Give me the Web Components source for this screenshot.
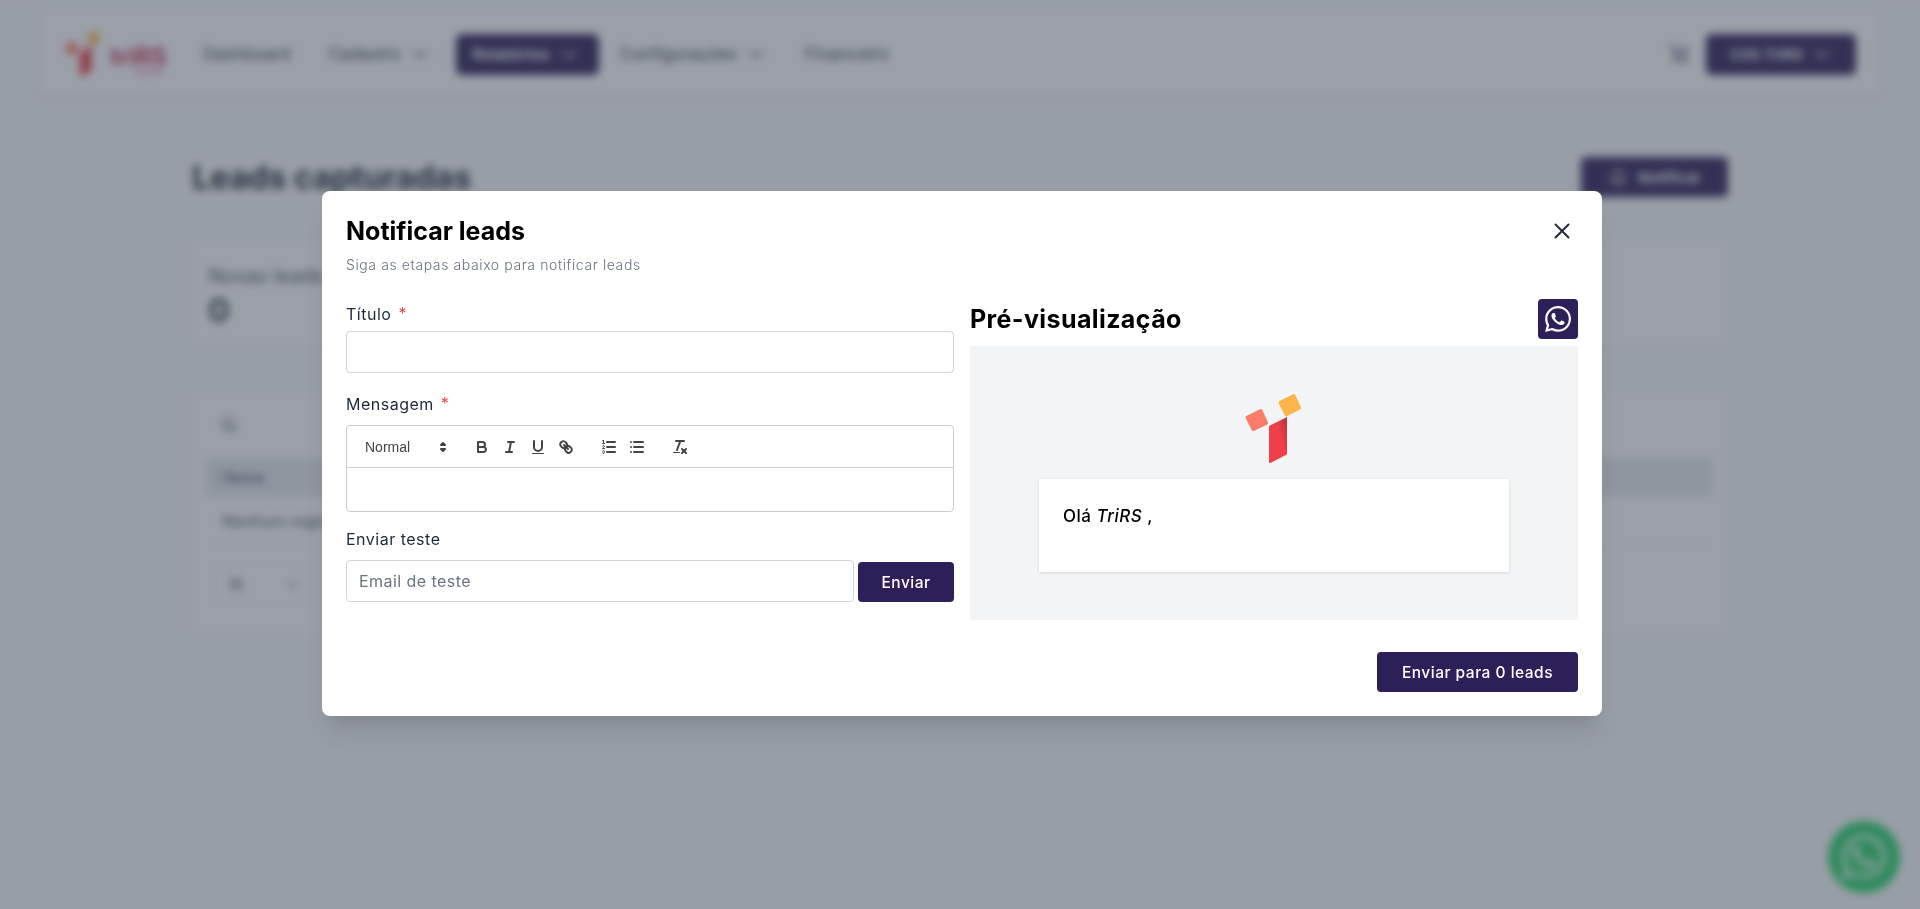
<!DOCTYPE html>
<html lang="pt-BR">
<head>
<meta charset="utf-8">
<title>Leads capturadas</title>
<style>
  html, body { margin: 0; height: 100%; overflow: hidden; }
  body { background: #f9fafb; font-family: Inter, "Liberation Sans", sans-serif; color: #111827; }
</style>
</head>
<body>
<leads-app></leads-app>

<script>
const WA_PATH = 'M17.472 14.382c-.297-.149-1.758-.867-2.03-.967-.273-.099-.471-.148-.67.15-.197.297-.767.966-.94 1.164-.173.199-.347.223-.644.075-.297-.15-1.255-.463-2.39-1.475-.883-.788-1.48-1.761-1.653-2.059-.173-.297-.018-.458.13-.606.134-.133.298-.347.446-.52.149-.174.198-.298.298-.497.099-.198.05-.371-.025-.52-.075-.149-.669-1.612-.916-2.207-.242-.579-.487-.5-.669-.51-.173-.008-.371-.01-.57-.01-.198 0-.52.074-.792.372-.272.297-1.04 1.016-1.04 2.479 0 1.462 1.065 2.875 1.213 3.074.149.198 2.096 3.2 5.077 4.487.709.306 1.262.489 1.694.625.712.227 1.36.195 1.871.118.571-.085 1.758-.719 2.006-1.413.248-.694.248-1.289.173-1.413-.074-.124-.272-.198-.57-.347m-5.421 7.403h-.004a9.87 9.87 0 01-5.031-1.378l-.361-.214-3.741.982.998-3.648-.235-.374a9.86 9.86 0 01-1.51-5.26c.001-5.45 4.436-9.884 9.888-9.884 2.64 0 5.122 1.03 6.988 2.898a9.825 9.825 0 012.893 6.994c-.003 5.45-4.437 9.884-9.885 9.884m8.413-18.297A11.815 11.815 0 0012.05 0C5.495 0 .16 5.335.157 11.892c0 2.096.547 4.142 1.588 5.945L.057 24l6.305-1.654a11.882 11.882 0 005.683 1.448h.005c6.554 0 11.89-5.335 11.893-11.893a11.821 11.821 0 00-3.48-8.413z';

const CHEVRON = '<svg width="20" height="20" viewBox="0 0 20 20" fill="none" stroke="currentColor" stroke-width="1.6" stroke-linecap="round" stroke-linejoin="round"><path d="M3 7l7 7 7-7"/></svg>';

class Base extends HTMLElement {
  connectedCallback() {
    if (this.shadowRoot) return;
    this.attachShadow({ mode: 'open' });
    this.shadowRoot.innerHTML = this.render();
  }
}

class TrirsMark extends Base {
  render() {
    return `<style>:host{display:block;line-height:0}</style>
    <svg width="100%" height="100%" viewBox="0 0 58 70">
      <defs><linearGradient id="fold" x1="1" y1="0" x2="0.55" y2="0.35">
        <stop offset="0" stop-color="#b8323c"/><stop offset="1" stop-color="#ef4049"/></linearGradient></defs>
      <path d="M1.4 22.6 15 15.8q1.6-.7 2.3.8l5.6 12.2q.6 1.5-.8 2.2L9 37.4q-1.6.7-2.3-.8L.7 24.8q-.5-1.5.7-2.2z" fill="#f87c66"/>
      <path d="M34.4 7.6 48 .8q1.6-.7 2.3.8l5.6 12.2q.6 1.5-.8 2.2l-13 6.6q-1.6.7-2.3-.8l-6.1-11.8q-.5-1.5.7-2.2z" fill="#fdb44b"/>
      <path d="M24 32.6 42 23.4v36.3q0 1.3-1.2 1.9L25.4 69.4q-1.4.6-1.4-1z" fill="url(#fold)"/>
    </svg>`;
  }
}

class NavItem extends Base {
  render() {
    const active = this.hasAttribute('active');
    return `<style>
      :host{display:flex;align-items:center;height:41px;flex:none;box-sizing:border-box;padding:0 16px;gap:9px;
        border-radius:6px;font-size:${active ? 16 : 17}px;font-weight:${active ? 600 : 400};white-space:nowrap;
        color:${active ? '#fff' : '#374151'};background:${active ? '#2d1f57' : 'transparent'}}
      svg{flex:none}
    </style><slot></slot>${this.hasAttribute('menu') ? CHEVRON : ''}`;
  }
}

class NavBar extends Base {
  render() {
    return `<style>
      :host{display:flex;align-items:center;height:84px;box-sizing:border-box;margin:12px 40px 0;padding:0 24px;background:#fff;
        box-shadow:0 2px 6px rgba(0,0,0,.12)}
      .logo{display:flex;align-items:flex-start;width:123px;flex:none;height:48px}
      trirs-mark{width:38px;height:48px}
      .brand{margin:15px 0 0 8px;color:#c8365a}
      .word{display:block;font-size:24px;line-height:24px;font-weight:700}
      .tag{display:block;width:30px;height:3px;margin:2px 0 0 24px;background:#e58aa0}
      .dash{width:125px}.cad{width:138px}.rel{width:143px;margin-left:6px}.cfg{width:186px;margin-left:4px}
      .sp{flex:1}
      .cart{color:#4b4f7a;margin-right:16px;line-height:0}
      .acc{display:flex;align-items:center;justify-content:space-between;width:150px;box-sizing:border-box;height:41px;
        padding:0 24px;border-radius:6px;background:#2d1f57;color:#fff;font-size:15px;font-weight:600}
    </style>
    <div class="logo"><trirs-mark></trirs-mark><div class="brand"><span class="word">triRS</span><span class="tag"></span></div></div>
    <nav-item class="dash">Dashboard</nav-item>
    <nav-item class="cad" menu>Cadastro</nav-item>
    <nav-item class="rel" active menu>Relatórios</nav-item>
    <nav-item class="cfg" menu>Configurações</nav-item>
    <nav-item>Financeiro</nav-item>
    <div class="sp"></div>
    <div class="cart"><svg width="22" height="22" viewBox="0 0 22 22" fill="none" stroke="currentColor" stroke-width="1.7"><path d="M1 2h3l3 12h11M5 5h15l-2 6H7"/><circle cx="8" cy="18" r="1.6"/><circle cx="17" cy="18" r="1.6"/></svg></div>
    <div class="acc"><span>CSS TriRS</span>${CHEVRON}</div>`;
  }
}

class LeadsPage extends Base {
  render() {
    return `<style>
      :host{display:block;margin:0 192px 0 190px}
      .head{display:flex;justify-content:space-between;align-items:center;margin-top:61px;height:40px}
      h1{margin:0 0 0 2px;font-size:32px;font-weight:700;color:#1f2937;white-space:nowrap}
      .notify{display:flex;align-items:center;gap:10px;width:147px;height:40px;justify-content:center;box-sizing:border-box;
        background:#2d1f57;color:#fff;border-radius:5px;font-size:15px;font-weight:600}
      .card{background:#fff;box-shadow:0 1px 3px rgba(0,0,0,.08);border-radius:4px;box-sizing:border-box}
      .stat{margin-top:46px;height:102px;padding:21px 18px}
      .stat p{margin:0;font-size:20px;line-height:24px;color:#4b5563}
      .stat b{display:block;margin-top:5px;font-size:32px;line-height:36px;color:#374151}
      .list{margin-top:50px;height:240px;padding:20px 15px}
      .search{color:#6b7280;line-height:0;margin-left:14px}
      .thead{margin-top:22px;height:40px;display:flex;align-items:center;gap:6px;padding-left:12px;background:#e8eaef;font-size:14px;font-weight:500;color:#4b5563}
      .thead i{display:block;width:2px;height:14px;background:#9ca3af}
      .row{height:48px;display:flex;align-items:center;padding-left:17px;border-bottom:1px solid #e5e7eb;font-size:16px;color:#4b5563}
      .pager{display:flex;align-items:center;justify-content:space-between;width:96px;height:38px;margin:19px 0 0 10px;padding:0 10px 0 12px;
        box-sizing:border-box;border:1px solid #e5e7eb;border-radius:4px;font-size:15px;color:#374151}
      .pager svg{width:14px;height:14px;display:block}
    </style>
    <div class="head"><h1>Leads capturadas</h1>
      <div class="notify"><svg width="20" height="20" viewBox="0 0 24 24" fill="none" stroke="#fff" stroke-width="2"><path d="M6 9a6 6 0 0112 0c0 6 2 7 2 8H4c0-1 2-2 2-8zM10 20a2 2 0 004 0"/></svg>Notificar</div></div>
    <div class="card stat"><p>Novas leads</p><b>0</b></div>
    <div class="card list">
      <div class="search"><svg width="20" height="20" viewBox="0 0 24 24" fill="none" stroke="currentColor" stroke-width="2.4"><circle cx="11" cy="11" r="7"/><path d="M16 16l5 5"/></svg></div>
      <div class="thead"><i></i>Nome</div>
      <div class="row">Nenhum registro encontrado</div>
      <div class="pager"><span>10</span>${CHEVRON}</div>
    </div>`;
  }
}

class FormField extends Base {
  render() {
    const req = this.hasAttribute('required');
    return `<style>
      :host{display:block}
      label{display:block;height:24px;font-size:16px;letter-spacing:.5px;line-height:24px;color:#1f2937}
      i{font-style:normal;color:#ef4444;margin-left:7px;position:relative;top:-1px}
    </style><label>${this.getAttribute('label')}${req ? '<i>*</i>' : ''}</label><slot></slot>`;
  }
}

class TextBox extends Base {
  render() {
    const ph = this.getAttribute('placeholder') || '';
    return `<style>
      :host{display:block;height:42px}
      input{display:block;width:100%;height:100%;box-sizing:border-box;border:1px solid #d1d5db;border-radius:4px;background:#fff;
        padding:0 12px;font:400 16px Inter,"Liberation Sans",sans-serif;letter-spacing:.45px;color:#111827;outline:0}
      input::placeholder{color:#6b7280;opacity:1}
    </style><input type="text" placeholder="${ph}">`;
  }
}

class QuillEditor extends Base {
  render() {
    return `<style>
      :host{display:block;height:87px;box-sizing:border-box;border:1px solid #ccc;border-radius:4px;background:#fff}
      .bar{display:flex;align-items:center;height:42px;box-sizing:border-box;padding:0 8px;border-bottom:1px solid #ccc}
      .picker{display:flex;align-items:center;justify-content:space-between;width:98px;height:24px;box-sizing:border-box;padding:0 1px 0 10px;
        font:500 14px "Liberation Sans",sans-serif;color:#444;margin-right:15px}
      .tool{display:flex;align-items:center;justify-content:center;width:28px;height:24px}
      .gap{width:15px}
      svg{width:18px;height:18px;display:block;fill:none;stroke:#444;stroke-width:2;stroke-linecap:round;stroke-linejoin:round}
      .thin{stroke-width:1}
      .fill{fill:#444;stroke:none}
    </style>
    <div class="bar">
      <div class="picker"><span>Normal</span><svg viewBox="0 0 18 18"><polygon points="7 11 9 13 11 11 7 11"/><polygon points="7 7 9 5 11 7 7 7"/></svg></div>
      <div class="tool"><svg viewBox="0 0 18 18"><path d="M5,4H9.5A2.5,2.5,0,0,1,12,6.5v0A2.5,2.5,0,0,1,9.5,9H5A0,0,0,0,1,5,9V4A0,0,0,0,1,5,4Z"/><path d="M5,9h5.5A2.5,2.5,0,0,1,13,11.5v0A2.5,2.5,0,0,1,10.5,14H5a0,0,0,0,1,0,0V9A0,0,0,0,1,5,9Z"/></svg></div>
      <div class="tool"><svg viewBox="0 0 18 18"><line x1="7" x2="13" y1="4" y2="4"/><line x1="5" x2="11" y1="14" y2="14"/><line x1="8" x2="10" y1="14" y2="4"/></svg></div>
      <div class="tool"><svg viewBox="0 0 18 18"><path d="M5,3V9a4.012,4.012,0,0,0,4,4H9a4.012,4.012,0,0,0,4-4V3"/><rect class="fill" height="1" rx="0.5" ry="0.5" width="12" x="3" y="15"/></svg></div>
      <div class="tool"><svg viewBox="0 0 18 18"><line x1="7" x2="11" y1="7" y2="11"/><path d="M8.9,4.577a3.476,3.476,0,0,1,.36,4.679A3.476,3.476,0,0,1,4.577,8.9C3.185,7.5,2.035,6.4,4.217,4.217S7.5,3.185,8.9,4.577Z"/><path d="M13.423,9.1a3.476,3.476,0,0,0-4.679-.36,3.476,3.476,0,0,0,.36,4.679c1.392,1.392,2.5,2.542,4.679.36S14.815,10.5,13.423,9.1Z"/></svg></div>
      <div class="gap"></div>
      <div class="tool"><svg viewBox="0 0 18 18"><line x1="7" x2="15" y1="4" y2="4"/><line x1="7" x2="15" y1="9" y2="9"/><line x1="7" x2="15" y1="14" y2="14"/><line class="thin" x1="2.5" x2="4.5" y1="5.5" y2="5.5"/><path class="fill" d="M3.5,6A0.5,0.5,0,0,1,3,5.5V3.085l-0.276.138A0.5,0.5,0,0,1,2.053,3c-0.124-.247-0.023-0.324.224-0.447l1-.5A0.5,0.5,0,0,1,4,2.5v3A0.5,0.5,0,0,1,3.5,6Z"/><path class="thin" d="M4.5,10.5h-2c0-.234,1.85-1.076,1.85-2.234A0.959,0.959,0,0,0,2.5,8.156"/><path class="thin" d="M2.5,14.846a0.959,0.959,0,0,0,1.85-.109A0.7,0.7,0,0,0,3.75,14a0.688,0.688,0,0,0,.6-0.736,0.959,0.959,0,0,0-1.85-.109"/></svg></div>
      <div class="tool"><svg viewBox="0 0 18 18"><line x1="6" x2="15" y1="4" y2="4"/><line x1="6" x2="15" y1="9" y2="9"/><line x1="6" x2="15" y1="14" y2="14"/><line x1="3" x2="3" y1="4" y2="4"/><line x1="3" x2="3" y1="9" y2="9"/><line x1="3" x2="3" y1="14" y2="14"/></svg></div>
      <div class="gap"></div>
      <div class="tool"><svg viewBox="0 0 18 18"><line x1="5" x2="13" y1="3" y2="3"/><line x1="6" x2="9.35" y1="12" y2="3"/><line x1="11" x2="15" y1="11" y2="15"/><line x1="15" x2="11" y1="11" y2="15"/><rect class="fill" height="1" rx="0.5" ry="0.5" width="7" x="2" y="14"/></svg></div>
    </div>`;
  }
}

class PrimaryBtn extends Base {
  render() {
    return `<style>
      :host{display:flex;align-items:center;justify-content:center;box-sizing:border-box;height:40px;background:#2d1f57;color:#fff;
        border-radius:4px;font-size:15.5px;letter-spacing:.5px;font-weight:500;white-space:nowrap}
    </style><slot></slot>`;
  }
}

class MailPreview extends Base {
  render() {
    return `<style>
      :host{display:block}
      .head{display:flex;align-items:center;justify-content:space-between;height:40px;margin-bottom:7px}
      h2{margin:0;font-size:25px;letter-spacing:.4px;line-height:32px;font-weight:700;color:#000}
      .wa{display:flex;align-items:center;justify-content:center;width:40px;height:40px;border-radius:4px;background:#2d1f57}
      .wa svg{width:26px;height:26px;fill:#fff;display:block}
      .box{background:#f3f4f6;height:274px;box-sizing:border-box;padding:47px 69px 48px;display:flex;flex-direction:column;align-items:center}
      trirs-mark{width:58px;height:71px;flex:none;margin:0 0 15px 0}
      .mail{align-self:stretch;flex:1;background:#fff;padding:24px;font-size:17px;letter-spacing:.5px;line-height:26px;font-weight:500;color:#000;
        box-shadow:0 1px 3px rgba(0,0,0,.12)}
      em{font-weight:500}
    </style>
    <div class="head"><h2>Pré-visualização</h2>
      <div class="wa"><svg viewBox="0 0 24 24"><path d="${WA_PATH}"/></svg></div></div>
    <div class="box"><trirs-mark></trirs-mark>
      <div class="mail">Olá <em>TriRS</em> ,</div></div>`;
  }
}

class NotifyModal extends Base {
  render() {
    return `<style>
      :host{position:fixed;inset:0;display:flex;align-items:center;justify-content:center;padding:0 0 2px 4px;box-sizing:border-box;
        background:rgba(55,65,81,.5);backdrop-filter:blur(4px)}
      .dialog{width:1280px;height:525px;box-sizing:border-box;padding:24px;background:#fff;border-radius:8px;
        box-shadow:0 20px 25px -5px rgba(0,0,0,.1),0 10px 10px -5px rgba(0,0,0,.04);display:flex;flex-direction:column}
      .top{display:flex;justify-content:space-between;align-items:center;height:32px}
      h3{margin:0;font-size:25px;line-height:32px;font-weight:700;color:#000}
      .close{line-height:0;margin-right:8px}
      .sub{margin:8px 0 0;font-size:14px;letter-spacing:.6px;font-weight:300;line-height:20px;color:#6b7280}
      .cols{display:grid;grid-template-columns:608px 608px;gap:16px;margin-top:24px}
      .left{display:flex;flex-direction:column;padding-top:3px}
      .left text-box{margin-top:5px}
      .m{margin-top:19px}
      quill-editor{margin-top:9px}
      .t{margin-top:15px}
      .send{display:flex;gap:4px;margin-top:9px}
      .send text-box{flex:1;margin:0}
      .send primary-btn{width:96px;margin-top:2px}
      .foot{display:flex;justify-content:flex-end;margin-top:32px}
      .foot primary-btn{width:201px}
    </style>
    <div class="dialog">
      <div class="top"><h3>Notificar leads</h3>
        <div class="close"><svg width="16" height="16" viewBox="0 0 16 16" fill="none" stroke="#1f2937" stroke-width="1.9" stroke-linecap="round"><path d="M1.5 1.5l13 13M14.5 1.5l-13 13"/></svg></div></div>
      <p class="sub">Siga as etapas abaixo para notificar leads</p>
      <div class="cols">
        <div class="left">
          <form-field label="Título" required><text-box></text-box></form-field>
          <form-field class="m" label="Mensagem" required><quill-editor></quill-editor></form-field>
          <form-field class="t" label="Enviar teste">
            <div class="send"><text-box placeholder="Email de teste"></text-box><primary-btn>Enviar</primary-btn></div>
          </form-field>
        </div>
        <mail-preview></mail-preview>
      </div>
      <div class="foot"><primary-btn>Enviar para 0 leads</primary-btn></div>
    </div>`;
  }
}

class WhatsappFab extends Base {
  render() {
    return `<style>
      :host{position:fixed;right:20px;bottom:16px;width:72px;height:72px;border-radius:50%;background:#25d366;
        display:flex;align-items:center;justify-content:center}
      svg{width:44px;height:44px;fill:#fff}
    </style><svg viewBox="0 0 24 24"><path d="${WA_PATH}"/></svg>`;
  }
}

class LeadsApp extends Base {
  render() {
    return `<style>:host{display:block}</style>
      <nav-bar></nav-bar>
      <leads-page></leads-page>
      <whatsapp-fab></whatsapp-fab>
      <notify-modal></notify-modal>`;
  }
}

customElements.define('trirs-mark', TrirsMark);
customElements.define('nav-item', NavItem);
customElements.define('nav-bar', NavBar);
customElements.define('leads-page', LeadsPage);
customElements.define('form-field', FormField);
customElements.define('text-box', TextBox);
customElements.define('quill-editor', QuillEditor);
customElements.define('primary-btn', PrimaryBtn);
customElements.define('mail-preview', MailPreview);
customElements.define('notify-modal', NotifyModal);
customElements.define('whatsapp-fab', WhatsappFab);
customElements.define('leads-app', LeadsApp);
</script>
</body>
</html>
